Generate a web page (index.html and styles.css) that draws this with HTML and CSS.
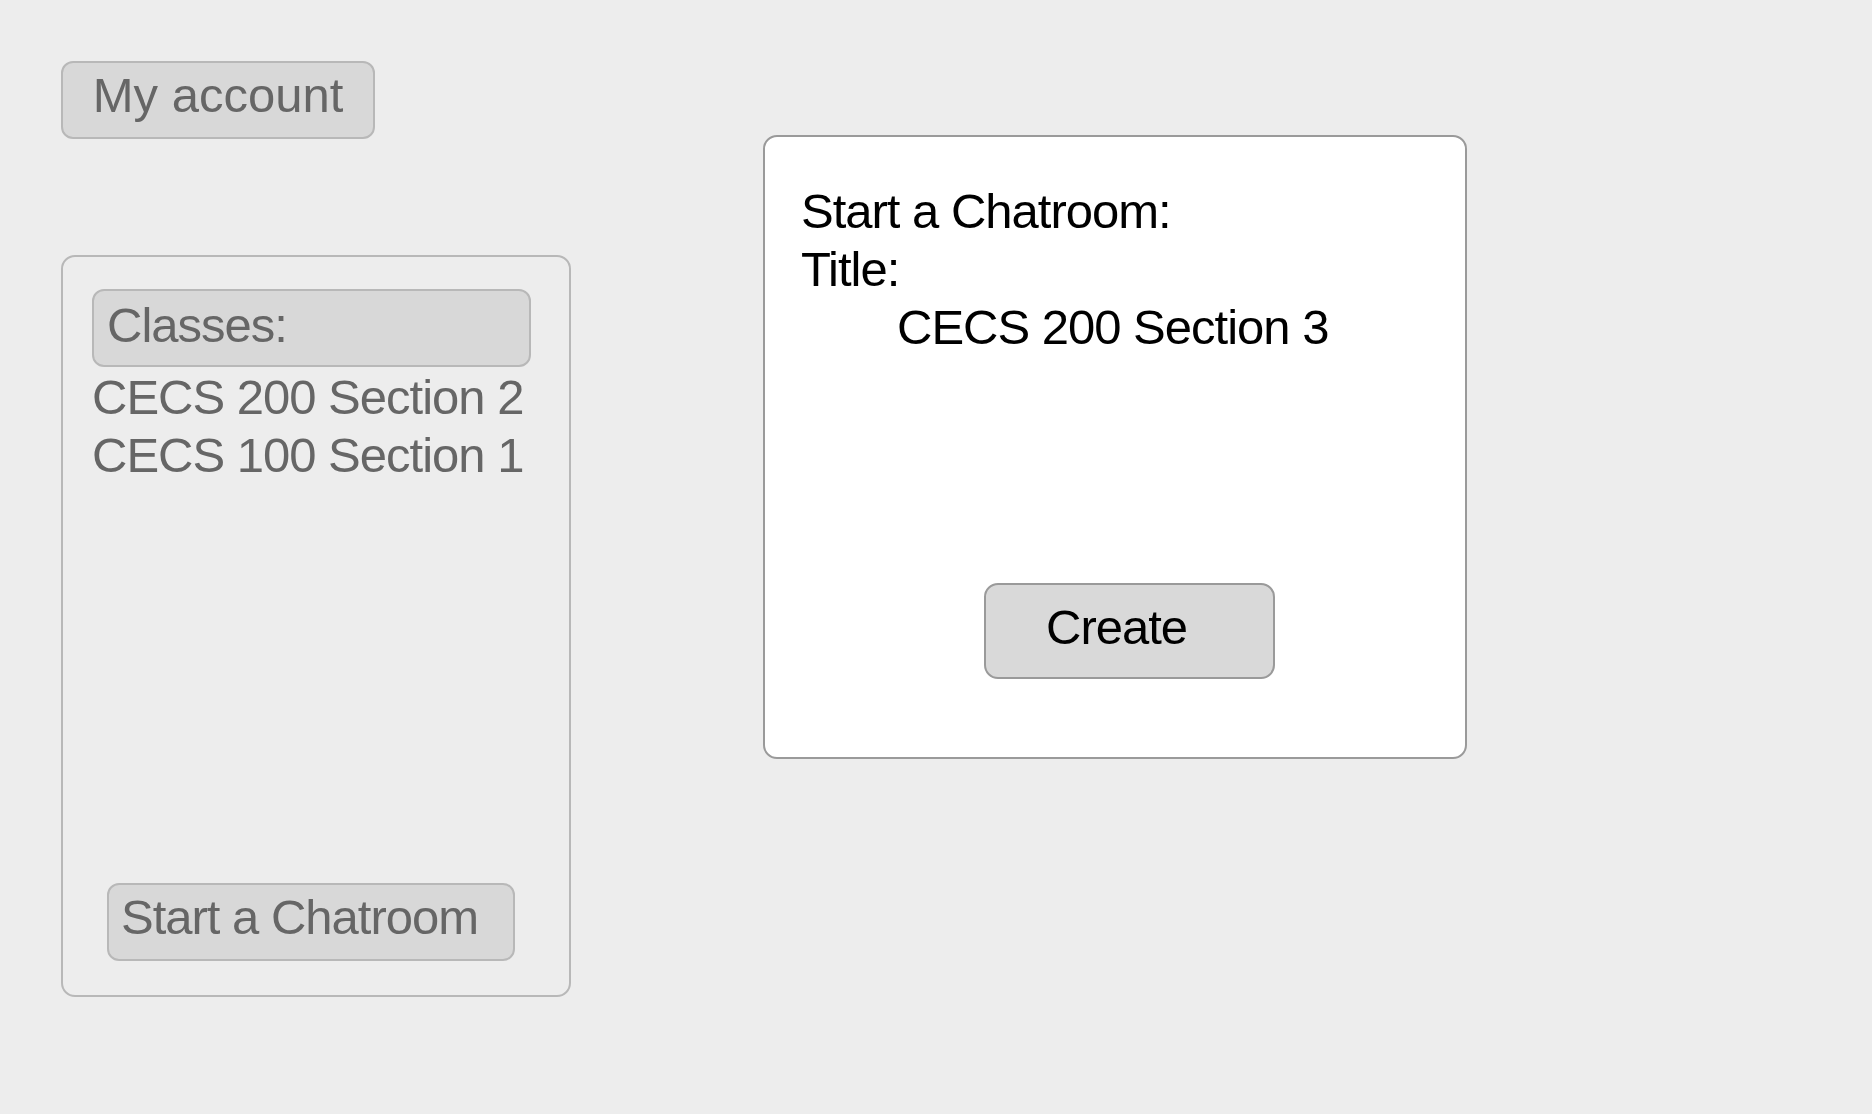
FILE: index.html
```html
<!DOCTYPE html>
<html lang="en">
<head>
<meta charset="utf-8">
<title>Start a Chatroom</title>
<link rel="stylesheet" href="styles.css">
</head>
<body>
<div class="page">
  <div class="left-col">
    <div class="btn account-btn">My account</div>
    <div class="classes-panel">
      <div class="classes-header">Classes:</div>
      <ul class="class-list">
        <li>CECS 200 Section 2</li>
        <li>CECS 100 Section 1</li>
      </ul>
      <div class="btn start-btn">Start a Chatroom</div>
    </div>
  </div>
  <div class="right-col">
    <div class="dialog">
      <div class="dialog-line">Start a Chatroom:</div>
      <div class="dialog-line">Title:</div>
      <div class="dialog-line indent">CECS 200 Section 3</div>
      <div class="create-btn">Create</div>
    </div>
  </div>
</div>
</body>
</html>
```
FILE: styles.css
```css
html, body {
  margin: 0;
  padding: 0;
}
body {
  background: #ededed;
  font-family: "Liberation Sans", Arial, sans-serif;
  font-size: 49px;
  line-height: 58px;
  letter-spacing: -1px;
  color: #666666;
  width: 1872px;
  height: 1114px;
  overflow: hidden;
}
.page {
  display: flex;
  flex-direction: row;
  padding: 61px 0 0 61px;
  gap: 192px;
}
.left-col {
  display: flex;
  flex-direction: column;
  gap: 116px;
}
.btn {
  background: #d8d8d8;
  border: 2px solid #b8b8b8;
  border-radius: 12px;
  box-sizing: border-box;
}
.account-btn {
  width: 314px;
  height: 78px;
  padding: 3px 0 13px;
  text-align: center;
  letter-spacing: 0;
}
.classes-panel {
  box-sizing: border-box;
  width: 510px;
  height: 742px;
  border: 2px solid #b8b8b8;
  border-radius: 14px;
  padding: 32px 29px 34px;
  display: flex;
  flex-direction: column;
}
.classes-header {
  box-sizing: border-box;
  width: 439px;
  height: 78px;
  padding: 5px 13px 11px;
  background: #d8d8d8;
  border: 2px solid #b8b8b8;
  border-radius: 12px;
}
.class-list {
  list-style: none;
  margin: 1px 0 0;
  padding: 0;
}
.start-btn {
  margin-top: auto;
  margin-left: 15px;
  width: 408px;
  height: 78px;
  padding: 3px 12px 13px;
}
.right-col {
  padding-top: 74px;
}
.dialog {
  box-sizing: border-box;
  width: 704px;
  height: 624px;
  background: #ffffff;
  border: 2px solid #9a9a9a;
  border-radius: 14px;
  padding: 45px 36px 78px;
  color: #000000;
}
.indent {
  padding-left: 96px;
}
.create-btn {
  box-sizing: border-box;
  margin-top: 227px;
  margin-left: 183px;
  width: 291px;
  height: 96px;
  padding: 13px 0 21px 60px;
  background: #d9d9d9;
  border: 2px solid #9a9a9a;
  border-radius: 14px;
}
```
